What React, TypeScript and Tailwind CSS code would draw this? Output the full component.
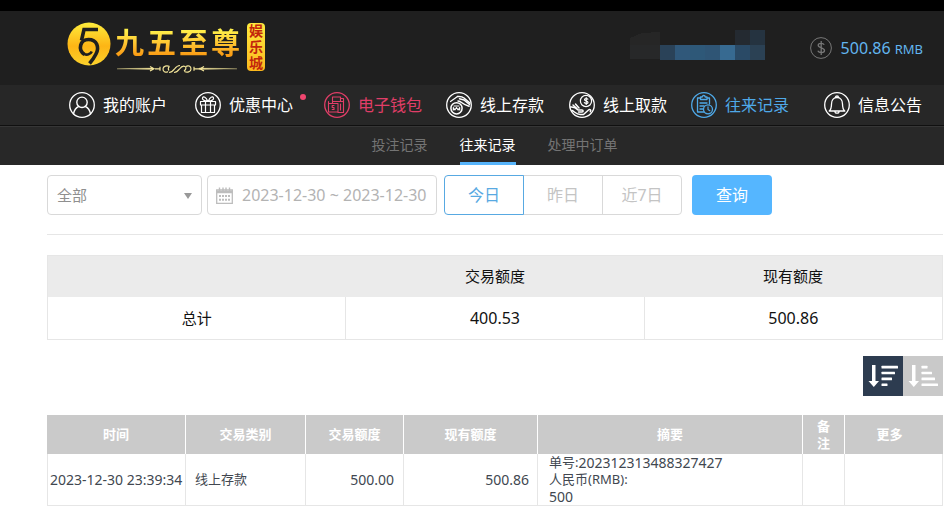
import { useState, type ReactNode } from "react";

function IconCircle({ children }: { children: ReactNode }) {
  return (
    <svg
      viewBox="0 0 26 26"
      className="size-[26px] shrink-0"
      fill="none"
      stroke="currentColor"
      strokeWidth="1.2"
      strokeLinecap="round"
      strokeLinejoin="round"
      aria-hidden="true"
    >
      <circle cx="13" cy="13" r="12.3" strokeWidth="1.3" />
      {children}
    </svg>
  );
}

const icons = {
  account: (
    <IconCircle>
      <circle cx="13" cy="10.3" r="5.2" strokeWidth="1.4" />
      <path d="M4.500 21.800c.6-3.600 2.500-6.200 5.300-7.500M21.500 21.800c-.6-3.600-2.500-6.200-5.300-7.500" strokeWidth="1.4" />
    </IconCircle>
  ),
  gift: (
    <IconCircle>
      <path d="M5.500 9.500h15v3.500h-15zM6.500 13v7.500h13V13M10.500 9.500v11M15.500 9.500v11M12.700 9.200C11 5 8.500 4 7.600 5.600S9 9.200 12.700 9.200M13.300 9.200C15 5 17.500 4 18.400 5.600S17 9.200 13.300 9.200" />
    </IconCircle>
  ),
  wallet: (
    <IconCircle>
      <path d="M8.500 11V5h8v4.500M4.500 11.500H14v8.500H4.500zM4.500 9.500v2M8.500 9.500h11v11H14M16.500 12v6M16.500 6.500h3v3M10 13.500H8.200v2H10v2H8.200" strokeWidth="1.1" />
    </IconCircle>
  ),
  deposit: (
    <IconCircle>
      <circle cx="10.500" cy="16.300" r="5.600" strokeWidth="1.500" />
      <path d="M7.300 18v-2.500l1.600 2.500 1.600-2.500 1.600 2.500 1.600-2.500V18M8 14h5" strokeWidth="1.100" />
      <path d="M11.500 4.500c3-.3 5 .2 6.500 1.500l6 5M12 9c1.500.2 2.500.7 3.500 1.500 2.200 1.700 4 2.800 7.500 3.700M13.500 6.800l4.500 1.200 5.500 4.500" strokeWidth="1.500" />
      <path d="M11.500 4.500L4.500 9.500" />
    </IconCircle>
  ),
  withdraw: (
    <IconCircle>
      <circle cx="17" cy="9" r="5.600" />
      <path d="M18.800 7.200c-.7-1-3.300-1-3.300.4 0 1.800 3.500 1 3.500 2.800 0 1.300-2.700 1.500-3.700.3M17.200 5.500v7" />
      <path d="M1.500 15c3-.5 5 .3 7.500 3h4c1.500 0 1.500 2 0 2H9.500M4 13l4 3.500M6.500 12l3.500 4M3 18.500c2.500 1 4 4 8.500 4h3l5-4.500c1.500-1.300 3 .2 1.800 1.700" strokeWidth="1.500" />
    </IconCircle>
  ),
  records: (
    <IconCircle>
      <path d="M13 20H6.500V6h3M16 6h2.500v6M9.500 7.500V5h1.700c0-2 3-2 3 0h1.800v2.500zM9 11h7M9 14h4M9 17h3" strokeWidth="1.300" />
      <circle cx="17" cy="17.300" r="4.500" strokeWidth="1.300" />
      <path d="M17 14.800v2.700l1.800 1.200" />
    </IconCircle>
  ),
  notice: (
    <IconCircle>
      <path d="M5.200 19c1.800-1.500 2.300-4 2.300-7 0-3.500 2-6.500 5.500-6.500s5.500 3 5.500 6.500c0 3 .5 5.500 2.300 7zM11.500 5.400c0-2 3-2 3 0M10.800 19.200c.2 2.600 4.200 2.600 4.400 0" strokeWidth="1.300" />
    </IconCircle>
  ),
};

const navItems = [
  { label: "我的账户", icon: icons.account, style: "pr-1 text-white" },
  { label: "优惠中心", icon: icons.gift, style: "pr-[7px] text-white", dot: true },
  { label: "电子钱包", icon: icons.wallet, style: "text-[#e03e67]" },
  { label: "线上存款", icon: icons.deposit, style: "pr-px text-white" },
  { label: "线上取款", icon: icons.withdraw, style: "text-white" },
  { label: "往来记录", icon: icons.records, style: "pr-[11px] text-[#4fa9e8]" },
  { label: "信息公告", icon: icons.notice, style: "text-white" },
];

function Logo() {
  return (
    <a href="#home" className="flex items-start" aria-label="九五至尊娱乐城">
      <svg viewBox="0 0 44 44" className="size-[44px]" aria-hidden="true">
        <defs>
          <linearGradient id="gold" x1="0" y1="0" x2="0" y2="1">
            <stop offset="0" stopColor="#fdec3c" />
            <stop offset="0.55" stopColor="#fdb515" />
            <stop offset="1" stopColor="#fbd22c" />
          </linearGradient>
        </defs>
        <circle cx="22" cy="22" r="21.500" fill="url(#gold)" />
        <g fill="none" stroke="#1f1f1f">
          <path d="M31 7.500H17L14.500 18.500" strokeWidth="3.600" />
          <path d="M17.500 32.500C10.500 28 13 17.500 21.500 17.500c8.500 0 11 8 7.500 14.500-1.500 3-3.500 6-6.500 9.500" strokeWidth="3.600" />
          <path d="M17 31.800c3 1.600 6.500.6 7.800-2.300" strokeWidth="2.600" />
        </g>
      </svg>
      <span className="ml-1 block w-[128px]">
        <span className="flex h-[42px] items-center gap-[3px] bg-linear-to-b from-[#fff04a] from-20% to-[#f99a12] to-80% bg-clip-text text-[29px] leading-[42px] font-bold text-transparent">
          <span>九</span>
          <span>五</span>
          <span>至</span>
          <span>尊</span>
        </span>
        <svg viewBox="0 0 124 12" className="h-3 w-[124px]" fill="none" stroke="#f3e59a" aria-hidden="true">
          <path d="M2 4.800L38 4v1.600zM122 4.800L84 4v1.600z" fill="#f3e59a" strokeWidth=".3" />
          <path d="M53 7.500c-2 1.500-5 .5-5-2.500s4-4 6.500-2.500M71 2.500c2-1.500 5-.5 5 2.500s-4 4-6.500 2.500M54 8.500c3 0 4-1.500 5.500-3.500S62.500 1.500 65 1.500M59 8.500c3 0 4-1.500 5.500-3.500S68 1.500 70 2.500 70.500 6 69 7M54.500 2.500c-1.500 1-1.500 3-.5 4" strokeWidth="1.200" />
          <path d="M35 2.500l4 2.300-4 2.300M89 2.500l-4 2.300 4 2.300M40 4.800h5M79 4.800h5M45 2.800v4M79 2.800v4" strokeWidth="1.200" />
        </svg>
      </span>
      <span className="ml-1 mt-px h-12 w-[18px] rounded-[4px] bg-linear-to-b from-[#fdea3e] to-[#fcb81c] px-[2px] text-[14px] leading-4 font-bold break-all text-[#c2260c]">
        娱乐城
      </span>
    </a>
  );
}

function MaskedName() {
  return (
    <svg viewBox="0 0 135 30" className="h-[30px] w-[135px]" shapeRendering="crispEdges" aria-hidden="true">
      <path d="M0 15V8L12 3l18-1v13z" fill="#262626" />
      <path d="M0 15h30v14H0z" fill="#272829" />
      <path d="M105 0h15v15h-15z" fill="#242a31" />
      <path d="M120 0h15v15h-15z" fill="#253340" />
      <path d="M30 15h15v15H30z" fill="#2a4258" />
      <path d="M45 15h15v15H45z" fill="#30587a" />
      <path d="M60 15h15v15H60z" fill="#2e5878" />
      <path d="M75 15h15v15H75z" fill="#2f5575" />
      <path d="M90 15h15v15H90z" fill="#376a91" />
      <path d="M105 15h15v15h-15z" fill="#2a4a66" />
      <path d="M120 15h15v15h-15z" fill="#2b4154" />
    </svg>
  );
}

function SortIcon({ widths }: { widths: number[] }) {
  return (
    <svg viewBox="0 0 40 40" className="size-10" fill="#fff" aria-hidden="true">
      <path d="M9 9h3.500v16H16l-5.200 6-5.300-6H9z" />
      {widths.map((w, i) => (
        <rect key={i} x="18.500" y={9.800 + i * 5.900} width={w} height="2.600" rx=".5" />
      ))}
    </svg>
  );
}

const records = [
  {
    time: "2023-12-30 23:39:34",
    type: "线上存款",
    amount: "500.00",
    balance: "500.86",
    order: "202312313488327427",
    total: "500",
  },
];

const periods = ["今日", "昨日", "近7日"];

export default function App() {
  const [period, setPeriod] = useState("今日");
  const [descending, setDescending] = useState(true);

  return (
    <div className="bg-white font-['Noto_Sans','Noto_Sans_CJK_SC',sans-serif] text-[#111]">
      <header>
        <div className="h-[11px] bg-black" />
        <div className="bg-[#1f1f1f]">
          <div className="ml-[47px] flex h-[74px] justify-between pt-[11px] pr-[21px] pl-5">
            <Logo />
            <div className="flex h-[52px] items-center">
              <div className="mr-[45px] pb-[6px]">
                <MaskedName />
              </div>
              <svg viewBox="0 0 22 22" className="mr-[9px] size-[22px]" fill="none" stroke="#777" aria-hidden="true">
                <circle cx="11" cy="11" r="10.400" />
                <path d="M14.200 7.800c-1-2-6-2-6 .5 0 3 6.300 2 6.300 5.200 0 2.800-5.500 2.800-6.700.3M11.200 4v14" strokeWidth="1.300" />
              </svg>
              <p className="flex items-baseline gap-1 text-[#62b5ef]">
                <span className="text-[16px]">500.86</span>
                <span className="text-[13px]">RMB</span>
              </p>
            </div>
          </div>
        </div>
        <nav className="border-b border-[#101010] bg-[#272727]" aria-label="主导航">
          <ul className="ml-[69px] flex h-10 items-center gap-6">
            {navItems.map((item) => (
              <li key={item.label}>
                <a href="#nav" className={`relative flex shrink-0 items-center gap-2 text-[16px] whitespace-nowrap ${item.style}`}>
                  {item.icon}
                  {item.label}
                  {item.dot && <span className="absolute -right-[6px] top-[2px] size-[6px] rounded-full bg-[#f0466f]" />}
                </a>
              </li>
            ))}
          </ul>
        </nav>
        <nav className="border-t border-[#363636] bg-[#282828]" aria-label="记录">
          <div className="mr-[2px] ml-[47px] flex h-[38px] justify-center gap-8 text-[14px] *:flex *:items-center *:border-b-3">
            <a href="#bets" className="border-transparent text-[#747474]">投注记录</a>
            <a href="#history" aria-current="page" className="border-[#56b4fb] text-white">往来记录</a>
            <a href="#pending" className="border-transparent text-[#747474]">处理中订单</a>
          </div>
        </nav>
      </header>

      <main className="mr-px ml-[47px]">
        <form className="flex items-center border-b border-[#e6e6e6] pt-[10px] pb-[19px]" onSubmit={(e) => e.preventDefault()}>
          <div className="relative mr-[5px] w-[155px]">
            <select
              aria-label="交易类别"
              className="h-10 w-full appearance-none rounded-[4px] border border-[#d9d9d9] bg-white px-[9px] text-[15px] text-[#8f8f8f]"
            >
              <option>全部</option>
            </select>
            <svg viewBox="0 0 8 6" className="pointer-events-none absolute top-[18px] right-[10px] h-[6px] w-2" fill="#999" aria-hidden="true">
              <path d="M0 0h8L4 6z" />
            </svg>
          </div>
          <label className="mr-[7px] flex h-10 w-[230px] items-center rounded-[4px] border border-[#d9d9d9] pl-2">
            <svg viewBox="0 0 17 17" className="mr-[9px] size-[17px] shrink-0" fill="none" stroke="#bdbdbd" aria-hidden="true">
              <path d="M.7 3h15.600v13.300H.7z" strokeWidth="1.300" />
              <path d="M.5 5h16" strokeWidth="2.500" />
              <path d="M3.500 .5v4M7 .5v4M10 .5v4M13.500 .5v4" strokeWidth="1.400" />
              <path d="M3 9h11M3 12.700h11" strokeWidth="2" strokeDasharray="2 1" />
            </svg>
            <input
              aria-label="日期范围"
              type="text"
              defaultValue="2023-12-30 ~ 2023-12-30"
              className="w-full min-w-0 bg-transparent text-[16px] text-[#b3b3b3] outline-none"
            />
          </label>
          <div className="mr-[10px] flex">
            {periods.map((p) => (
              <button
                key={p}
                type="button"
                aria-pressed={period === p}
                onClick={() => setPeriod(p)}
                className={`-ml-px h-10 w-20 border text-[16px] first:ml-0 first:rounded-l-[4px] last:rounded-r-[4px] ${
                  period === p ? "relative z-10 border-[#58a9e2] text-[#58a9e2]" : "border-[#d9d9d9] text-[#c4c4c4]"
                }`}
              >
                {p}
              </button>
            ))}
          </div>
          <button type="submit" className="h-10 w-20 rounded-[4px] bg-[#55b6ff] text-[16px] text-white">
            查询
          </button>
        </form>

        <table className="mt-5 w-full table-fixed border-collapse border border-[#e6e6e6] text-center text-[15px]">
          <thead>
            <tr className="h-[41px] bg-[#ebebeb]">
              <th scope="col" aria-label="项目" />
              <th scope="col" className="font-normal">交易额度</th>
              <th scope="col" className="font-normal">现有额度</th>
            </tr>
          </thead>
          <tbody>
            <tr className="h-[43px]">
              <th scope="row" className="font-normal">总计</th>
              <td className="border-l border-[#e6e6e6] text-[16px]">400.53</td>
              <td className="border-l border-[#e6e6e6] text-[16px]">500.86</td>
            </tr>
          </tbody>
        </table>

        <div className="mt-4 flex justify-end">
          <button
            type="button"
            aria-label="降序"
            onClick={() => setDescending(true)}
            className={descending ? "bg-[#2d3c50]" : "bg-[#c9c9c9]"}
          >
            <SortIcon widths={[16.5, 13.5, 10.5, 6]} />
          </button>
          <button
            type="button"
            aria-label="升序"
            onClick={() => setDescending(false)}
            className={descending ? "bg-[#c9c9c9]" : "bg-[#2d3c50]"}
          >
            <SortIcon widths={[6, 10.5, 13.5, 16.5]} />
          </button>
        </div>

        <table className="mt-[19px] w-full table-fixed border-separate border-spacing-0 text-[13px] text-[#414750]">
          <colgroup>
            <col className="w-[139px]" />
            <col className="w-[120px]" />
            <col className="w-[98px]" />
            <col className="w-[134px]" />
            <col />
            <col className="w-[42px]" />
            <col className="w-[98px]" />
          </colgroup>
          <thead>
            <tr className="h-[39px] bg-[#cacaca] leading-[17px] text-white">
              {["时间", "交易类别", "交易额度", "现有额度", "摘要", "备注", "更多"].map((h) => (
                <th key={h} scope="col" className="border-r border-white px-3 py-0 font-bold last:border-[#cacaca] last:pr-5">
                  {h}
                </th>
              ))}
            </tr>
          </thead>
          <tbody>
            {records.map((r) => (
              <tr key={r.order} className="h-[52px] leading-[17px] *:border-r *:border-b *:border-[#e6e6e6]">
                <td className="border-l pl-[2px] text-[14px] whitespace-nowrap">{r.time}</td>
                <td className="pl-[9px]">{r.type}</td>
                <td className="pr-[9px] text-right text-[14px]">{r.amount}</td>
                <td className="pr-2 text-right text-[14px]">{r.balance}</td>
                <td className="pl-[11px]">
                  <p className="flex items-center">
                    单号:<span className="text-[14px]">{r.order}</span>
                  </p>
                  <p>人民币(RMB):</p>
                  <p className="text-[14px]">{r.total}</p>
                </td>
                <td />
                <td />
              </tr>
            ))}
          </tbody>
        </table>
      </main>
    </div>
  );
}
